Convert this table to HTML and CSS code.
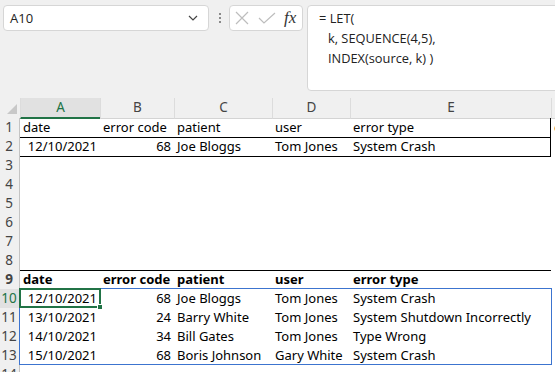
FILE: index.html
```html
<!DOCTYPE html>
<html lang="en">
<head>
    <meta charset="UTF-8">
    <title>LET SEQUENCE INDEX</title>
    <link rel="stylesheet" href="styles.css">
</head>
<body>

<div class="toolbar">
    <div class="namebox">
        <span>A10</span>
        <svg width="10" height="6" viewBox="0 0 10 6"><path d="M1 1 L5 5 L9 1" fill="none" stroke="#444" stroke-width="1.2"/></svg>
    </div>
    <div class="grip"><i></i><i></i><i></i></div>
    <div class="fbuttons">
        <svg class="btn-x" width="14" height="14" viewBox="0 0 14 14"><path d="M1 1 L13 13 M13 1 L1 13" stroke="#bdbdbd" stroke-width="1.2"/></svg>
        <svg class="btn-ok" width="18" height="13" viewBox="0 0 18 13"><path d="M1 6 L6 11 L17 1" fill="none" stroke="#bdbdbd" stroke-width="1.2"/></svg>
        <span class="fx">fx</span>
    </div>
    <div class="formula">
        <div>= LET(</div>
        <div class="indent">k, SEQUENCE(4,5),</div>
        <div class="indent">INDEX(source, k) )</div>
    </div>
</div>

<div class="sheet">
    <div class="row head">
        <div class="corner"><span></span></div>
        <div class="ch sel">A</div>
        <div class="ch">B</div>
        <div class="ch">C</div>
        <div class="ch">D</div>
        <div class="ch">E</div>
        <div class="ch"></div>
    </div>
    <div class="row">
        <div class="rh">1</div>
        <div class="c t">date</div>
        <div class="c t">error code</div>
        <div class="c t">patient</div>
        <div class="c t">user</div>
        <div class="c t end">error type</div>
        <div class="c">c</div>
    </div>
    <div class="row">
        <div class="rh">2</div>
        <div class="c t r">12/10/2021</div>
        <div class="c t r">68</div>
        <div class="c t">Joe Bloggs</div>
        <div class="c t">Tom Jones</div>
        <div class="c t end">System Crash</div>
        <div class="c"></div>
    </div>
    <div class="row"><div class="rh">3</div><div class="c"></div><div class="c"></div><div class="c"></div><div class="c"></div><div class="c"></div><div class="c"></div></div>
    <div class="row"><div class="rh">4</div><div class="c"></div><div class="c"></div><div class="c"></div><div class="c"></div><div class="c"></div><div class="c"></div></div>
    <div class="row"><div class="rh">5</div><div class="c"></div><div class="c"></div><div class="c"></div><div class="c"></div><div class="c"></div><div class="c"></div></div>
    <div class="row"><div class="rh">6</div><div class="c"></div><div class="c"></div><div class="c"></div><div class="c"></div><div class="c"></div><div class="c"></div></div>
    <div class="row"><div class="rh">7</div><div class="c"></div><div class="c"></div><div class="c"></div><div class="c"></div><div class="c"></div><div class="c"></div></div>
    <div class="row">
        <div class="rh">8</div>
        <div class="c line"></div><div class="c line"></div><div class="c line"></div><div class="c line"></div><div class="c line"></div><div class="c"></div>
    </div>
    <div class="row bold">
        <div class="rh">9</div>
        <div class="c">date</div>
        <div class="c">error code</div>
        <div class="c">patient</div>
        <div class="c">user</div>
        <div class="c">error type</div>
        <div class="c"></div>
    </div>
    <div class="row">
        <div class="rh cur">10</div>
        <div class="c r">12/10/2021</div>
        <div class="c r">68</div>
        <div class="c">Joe Bloggs</div>
        <div class="c">Tom Jones</div>
        <div class="c">System Crash</div>
        <div class="c"></div>
    </div>
    <div class="row">
        <div class="rh">11</div>
        <div class="c r">13/10/2021</div>
        <div class="c r">24</div>
        <div class="c">Barry White</div>
        <div class="c">Tom Jones</div>
        <div class="c">System Shutdown Incorrectly</div>
        <div class="c"></div>
    </div>
    <div class="row">
        <div class="rh">12</div>
        <div class="c r">14/10/2021</div>
        <div class="c r">34</div>
        <div class="c">Bill Gates</div>
        <div class="c">Tom Jones</div>
        <div class="c">Type Wrong</div>
        <div class="c"></div>
    </div>
    <div class="row">
        <div class="rh">13</div>
        <div class="c r">15/10/2021</div>
        <div class="c r">68</div>
        <div class="c">Boris Johnson</div>
        <div class="c">Gary White</div>
        <div class="c">System Crash</div>
        <div class="c"></div>
    </div>
    <div class="row"><div class="rh">14</div><div class="c"></div><div class="c"></div><div class="c"></div><div class="c"></div><div class="c"></div><div class="c"></div></div>

    <!-- spill range and active cell -->
    <div class="spill"></div>
    <div class="active"><span class="handle"></span></div>
</div>

</body>
</html>
```

FILE: styles.css
```css
* {
    box-sizing: border-box;
}
body {
    margin: 0;
    width: 555px;
    height: 372px;
    overflow: hidden;
    background-color: #f0f0f0;
    font-family: "Noto Sans", "Open Sans", sans-serif;
}

/* formula bar */
.toolbar {
    display: flex;
    align-items: flex-start;
    height: 98px;
    padding: 5px 0 0 3px;
}
.namebox {
    width: 206px;
    height: 26px;
    display: flex;
    align-items: center;
    justify-content: space-between;
    padding: 0 10px 0 6px;
    background-color: #fff;
    border: 1px solid #d6d6d6;
    border-radius: 4px;
    font-family: "Open Sans", sans-serif;
    font-size: 13px;
    color: #222;
}
.grip {
    display: flex;
    flex-direction: column;
    gap: 2px;
    margin: 8px 8px 0 10px;
}
.grip i {
    width: 2px;
    height: 2px;
    background-color: #8a8a8a;
}
.fbuttons {
    width: 74px;
    height: 26px;
    display: flex;
    align-items: center;
    padding-left: 5px;
    background-color: #fff;
    border: 1px solid #d6d6d6;
    border-radius: 4px;
}
.btn-ok {
    margin-left: 9px;
}
.fx {
    margin-left: 8px;
    font-family: "Liberation Serif", serif;
    font-style: italic;
    font-size: 17px;
    color: #333;
}
.formula {
    flex: 1;
    height: 86px;
    margin: 0 -10px 0 4px;
    padding: 2px 0 0 11px;
    background-color: #fff;
    border: 1px solid #d6d6d6;
    border-radius: 4px;
    font-family: "Open Sans", sans-serif;
    font-size: 12.8px;
    line-height: 20px;
    color: #222;
}
.formula .indent {
    padding-left: 9px;
}

/* grid */
.sheet {
    position: relative;
    background-color: #fff;
}
.row {
    display: grid;
    grid-template-columns: 20px 80px 74px 98px 78px 201px 1fr;
    height: 19px;
    font-size: 13px;
    line-height: 19px;
}
.row.head {
    height: 20px;
    background-color: #f0f0f0;
}
.bold {
    font-weight: bold;
}
.corner {
    display: flex;
    align-items: flex-end;
    justify-content: flex-end;
    padding: 0 3px 4px 0;
    border-bottom: 1px solid #d4d4d4;
}
.corner span {
    width: 0;
    height: 0;
    border-left: 10px solid transparent;
    border-bottom: 10px solid #c8c8c8;
}
.ch {
    text-align: center;
    font-size: 13.5px;
    line-height: 19px;
    color: #444;
    border-left: 1px solid #dcdcdc;
    border-bottom: 1px solid #d4d4d4;
}
.ch.sel {
    background-color: #e1e1e1;
    color: #217346;
    border-bottom: 2px solid #217346;
}
.rh {
    text-align: center;
    padding-right: 1px;
    font-size: 13.5px;
    color: #444;
    background-color: #f0f0f0;
    border-bottom: 1px solid #dadada;
    border-right: 1px solid #c4c4c4;
}
.rh.cur {
    background-color: #e1e1e1;
    color: #217346;
}
.c {
    padding: 0 3px;
    white-space: nowrap;
    color: #000;
}
.c.r {
    text-align: right;
}
.t {
    border-bottom: 1px solid #000;
}
.t.end {
    border-right: 1px solid #000;
}
.line {
    border-bottom: 1px solid #000;
}

/* overlays */
.spill {
    position: absolute;
    left: 19px;
    top: 190px;
    width: 533px;
    height: 77px;
    border: 1px solid #3c74cf;
    pointer-events: none;
}
.active {
    position: absolute;
    left: 19px;
    top: 190px;
    width: 82px;
    height: 20px;
    border: 2px solid #217346;
}
.handle {
    position: absolute;
    right: -4px;
    bottom: -4px;
    width: 6px;
    height: 6px;
    background-color: #217346;
    border: 1px solid #fff;
}
```
